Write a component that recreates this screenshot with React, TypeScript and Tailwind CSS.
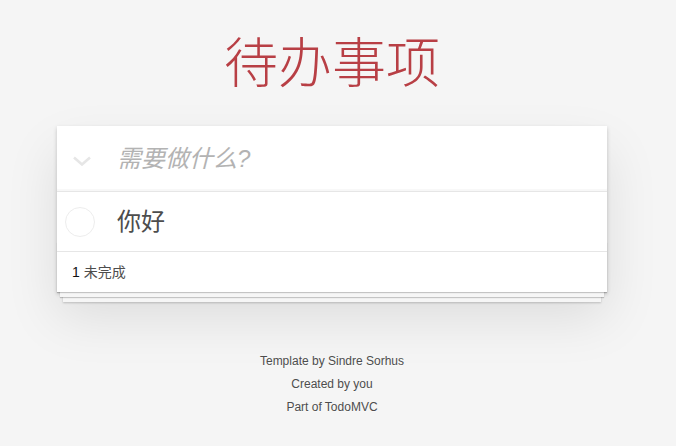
import React from 'react'

const cjk = "font-['Liberation_Sans','Noto_Sans_CJK_SC',sans-serif]"

function Chevron() {
  return (
    <svg width="18" height="10" viewBox="0 0 18 10" fill="none">
      <path d="M1 1.5 L9 8.5 L17 1.5" stroke="#e6e6e6" strokeWidth="2.6" />
    </svg>
  )
}

export default function App() {
  return (
    <div className={`min-h-[446px] w-full bg-[#f5f5f5] ${cjk}`}>
      <div className="flex w-[664px] flex-col items-center">
        {/* Title */}
        <h1 className="pt-[29px] text-[54px] font-light leading-[71px] text-[#b83f45]">
          待办事项
        </h1>

        {/* Card */}
        <section className="mt-[26px] w-[550px] bg-white shadow-[0_2px_4px_0_rgba(0,0,0,0.2),0_25px_50px_0_rgba(0,0,0,0.1)]">
          <header className="flex h-[65px] items-center shadow-[inset_0_-2px_1px_rgba(0,0,0,0.03)]">
            <div className="flex w-[60px] pl-[16px] pt-[4px]">
              <Chevron />
            </div>
            <span className="text-[24px] italic text-[#b3b3b3]">需要做什么?</span>
          </header>

          <ul className="border-t border-[#e6e6e6]">
            <li className="flex h-[59px] items-center">
              <div className="flex w-[60px] pl-[8px]">
                <span className="h-[30px] w-[30px] rounded-full border border-[#ededed]" />
              </div>
              <span className="text-[24px] text-[#4d4d4d]">你好</span>
            </li>
          </ul>

          <footer className="relative flex h-[41px] items-center border-t border-[#e6e6e6] px-[15px] text-[14px] text-[#4d4d4d]">
            <div className="pointer-events-none absolute inset-x-0 bottom-0 h-[50px] shadow-[0_1px_1px_rgba(0,0,0,0.2),0_8px_0_-3px_#f6f6f6,0_9px_1px_-3px_rgba(0,0,0,0.2),0_16px_0_-6px_#f6f6f6,0_17px_2px_-6px_rgba(0,0,0,0.2)]" />
            <span className="relative">
              <strong className="font-normal text-[#111]">1</strong> 未完成
            </span>
          </footer>
        </section>

        {/* Info */}
        <div className="mt-[62px] flex flex-col items-center gap-[9px] text-[12px] leading-[14px] text-[#4d4d4d] [text-shadow:0_1px_0_rgba(255,255,255,0.5)]">
          <p>Template by Sindre Sorhus</p>
          <p>Created by you</p>
          <p>Part of TodoMVC</p>
        </div>
      </div>
    </div>
  )
}
